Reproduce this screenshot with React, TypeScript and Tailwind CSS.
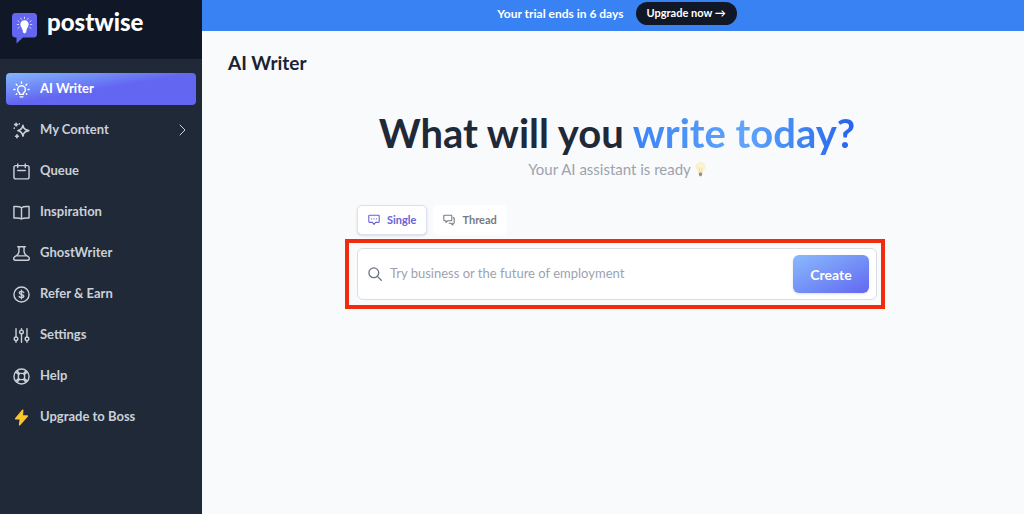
import React from 'react';
import clsx from 'clsx';

type IconProps = { className?: string };

const stroke = {
  fill: 'none',
  stroke: 'currentColor',
  strokeWidth: 1.5,
  strokeLinecap: 'round',
  strokeLinejoin: 'round',
  'aria-hidden': true,
} as const;

const BulbIcon = ({ className }: IconProps) => (
  <svg viewBox="0 0 18 18" className={className} {...stroke}>
    <path d="M6.900 12.500C5.500 11.700 4.900 10.500 4.900 9.200a4.100 4.100 0 0 1 8.200 0c0 1.300-.6 2.500-2 3.300v1.700H6.900z" />
    <path d="M7.500 16.800h3M9 1v1.400M3.400 3.500l.9.900M14.600 3.500l-.9.900M.9 9h1.200M15.900 9h1.200M3.400 14l.6-.6M14.600 14l-.6-.6" />
  </svg>
);

const SparkleIcon = ({ className }: IconProps) => (
  <svg viewBox="0 0 18 18" className={className} {...stroke} strokeWidth={1.7}>
    <path d="M10.500 3.500c.8 3.600 1.900 4.800 6.200 5.600-4.300.9-5.400 2.100-6.200 5.800-.8-3.700-1.900-4.900-5.300-5.800 3.400-.8 4.500-2 5.300-5.600z" />
    <path d="M3.300 1.300v3M1.800 2.800h3M4.200 13.600v3M2.700 15.100h3M1.300 6.500v.1M6.700 2v.1" />
  </svg>
);

const CalendarIcon = ({ className }: IconProps) => (
  <svg viewBox="0 0 18 18" className={className} {...stroke}>
    <rect x="1" y="2.800" width="16" height="14" rx="2" />
    <path d="M5 1v3.800M13 1v3.800M5 8h8" />
  </svg>
);

const BookIcon = ({ className }: IconProps) => (
  <svg viewBox="0 0 18 18" className={className} {...stroke}>
    <path d="M9 3.900C7.600 2.700 5 2.500 1 2.700v12.200c3.500-.2 6.600 0 8 1 1.400-1 4.500-1.200 8-1V2.700C13 2.500 10.400 2.700 9 3.900zM9 3.900v12" />
  </svg>
);

const FlaskIcon = ({ className }: IconProps) => (
  <svg viewBox="0 0 18 18" className={className} {...stroke}>
    <path d="M5 1.800h8M6.300 1.800v5.400c0 2-1.200 3.300-4.300 5.200-2.100 1.400-1.400 3.800.7 3.800h12.600c2.100 0 2.800-2.400.7-3.800-3.100-1.900-4.300-3.200-4.300-5.200V1.800" />
    <path d="M4.600 11.500h8.800" />
  </svg>
);

const DollarIcon = ({ className }: IconProps) => (
  <svg viewBox="0 0 18 18" className={className} {...stroke}>
    <circle cx="9" cy="9" r="8" />
    <path d="M11.400 6.900c-.4-.8-1.300-1.200-2.400-1.200-1.400 0-2.300.6-2.300 1.600C6.700 9.500 11.400 8.400 11.400 10.700c0 1-1 1.600-2.400 1.600-1.200 0-2.100-.5-2.500-1.300M9 4.500v9" />
  </svg>
);

const SlidersIcon = ({ className }: IconProps) => (
  <svg viewBox="0 0 18 18" className={className} {...stroke}>
    <path d="M3.200 1.800v8.600M3.200 14.600v1.600M9 1.800v1.400M9 7.200v9M14.800 1.800v8.600M14.800 14.600v1.600" />
    <circle cx="3.200" cy="12.500" r="1.900" />
    <circle cx="9" cy="5.200" r="1.900" />
    <circle cx="14.800" cy="12.500" r="1.900" />
  </svg>
);

const HelpIcon = ({ className }: IconProps) => (
  <svg viewBox="0 0 18 18" className={className} {...stroke}>
    <circle cx="9" cy="9" r="8" />
    <rect x="5.700" y="5.700" width="6.600" height="6.600" rx="2.400" />
    <path d="M3.200 4.500l2.700 2.200M4.500 3.200l2.200 2.700M14.800 4.500l-2.700 2.200M13.500 3.200l-2.200 2.700M3.200 13.500l2.700-2.200M4.500 14.800l2.200-2.700M14.800 13.500l-2.700-2.200M13.500 14.800l-2.200-2.700" />
  </svg>
);

const BoltIcon = ({ className }: IconProps) => (
  <svg viewBox="0 0 18 18" className={clsx(className, 'text-[#fbc62e]')} aria-hidden="true">
    <path d="M10.300 1.200 2.800 10.300h5L7 16.800l8.200-9.300H9.700z" fill="currentColor" stroke="currentColor" strokeWidth="1.600" strokeLinejoin="round" />
  </svg>
);

const ChevronIcon = ({ className }: IconProps) => (
  <svg viewBox="0 0 12 12" className={className} {...stroke} strokeWidth={1}>
    <path d="M3 1 8 6l-5 5" />
  </svg>
);

const SingleIcon = ({ className }: IconProps) => (
  <svg viewBox="0 0 12 12" className={className} {...stroke} strokeWidth={1.1}>
    <path d="M1.600 1.200h8.800c.5 0 .8.300.8.800v5.600c0 .5-.3.800-.8.800H7.600L6 10.300 4.400 8.400H1.600c-.5 0-.8-.3-.8-.8V2c0-.5.3-.8.800-.8z" />
    <path d="M3.600 4.800v.1M6 4.800v.1M8.400 4.800v.1" />
  </svg>
);

const ThreadIcon = ({ className }: IconProps) => (
  <svg viewBox="0 0 12 12" className={className} {...stroke} strokeWidth={1.1}>
    <path d="M1.500 1.200h6.600c.4 0 .7.300.7.700v4.200c0 .4-.3.700-.7.700H4.700L3 8.400V6.800H1.500c-.4 0-.7-.3-.7-.7V1.900c0-.4.300-.7.700-.7z" />
    <path d="M10.400 3.600c.5 0 .8.300.8.800v4.200c0 .4-.3.700-.7.700h-.7v1.700L8 9.300H6.200" />
  </svg>
);

const SearchIcon = ({ className }: IconProps) => (
  <svg viewBox="0 0 14 14" className={className} {...stroke} strokeWidth={1.3}>
    <circle cx="5.800" cy="5.800" r="4.900" />
    <path d="m9.400 9.400 3.900 3.900" />
  </svg>
);

const Logo = ({ className }: IconProps) => (
  <svg viewBox="0 0 25 31" className={className} aria-hidden="true">
    <path d="M3.500 0h18A3.500 3.500 0 0 1 25 3.500v17.500a3.500 3.500 0 0 1-3.500 3.500H11L4.500 30.500v-6h-1A3.500 3.500 0 0 1 0 21V3.500A3.500 3.500 0 0 1 3.500 0z" fill="#6366f1" />
    <path d="M12.500 7.300a4 4 0 0 1 4.200 4.200c0 2.300-1.900 3-2 5.500h-4.300c-.1-2.500-2.100-3.200-2.100-5.500a4 4 0 0 1 4.200-4.200zM10.800 17h3.500v2.300l-1.800 1.200-1.700-1.200z" fill="#fff" />
    <path d="M12.500 4.200v1.300M8.700 5.200l.7 1.100M16.300 5.200l-.7 1.100M6 7.900l1.100.7M19 7.900l-1.100.7M5.200 11.500h1.400M19.800 11.500h-1.400M6 15.200l1.100-.7M19 15.200l-1.100-.7" stroke="#fff" strokeWidth=".7" strokeLinecap="round" />
  </svg>
);

const IdeaIcon = ({ className }: IconProps) => (
  <svg viewBox="0 0 11 15" className={className} aria-hidden="true">
    <path d="M5.500.6a4.300 4.300 0 0 1 4.300 4.300c0 2.500-2.100 3.300-2.400 5.900H3.600C3.300 8.200 1.200 7.400 1.200 4.900A4.300 4.300 0 0 1 5.500.6z" fill="#fdf3d0" stroke="#f6e2a4" strokeWidth=".5" />
    <path d="M4.300 5.500 5 10.500h1l.7-5" fill="none" stroke="#f2cf74" strokeWidth=".6" />
    <path d="M3.900 10.800h3.200v2l-.8 1.500H4.700l-.8-1.500z" fill="#8d8f98" />
  </svg>
);

const navItems = [
  { label: 'AI Writer', icon: BulbIcon, active: true },
  { label: 'My Content', icon: SparkleIcon, expandable: true },
  { label: 'Queue', icon: CalendarIcon },
  { label: 'Inspiration', icon: BookIcon },
  { label: 'GhostWriter', icon: FlaskIcon },
  { label: 'Refer & Earn', icon: DollarIcon },
  { label: 'Settings', icon: SlidersIcon },
  { label: 'Help', icon: HelpIcon },
  { label: 'Upgrade to Boss', icon: BoltIcon },
];

const Sidebar = () => (
  <aside className="flex w-[202px] shrink-0 flex-col bg-[#1f2937]">
    <div className="flex h-[59px] items-start gap-[10px] bg-[#101726] px-3 pt-[13px]">
      <Logo className="h-[31px] w-[25px]" />
      <span className="text-[24px] leading-[18px] font-black text-white">postwise</span>
    </div>
    <nav className="flex flex-col gap-[9px] px-[6px] pt-[14px]">
      {navItems.map(({ label, icon: Icon, active, expandable }) => (
        <a
          key={label}
          href="#"
          className={clsx(
            'flex h-8 items-center gap-[10px] rounded-[4px] px-[7px] text-[13px] font-bold',
            active
              ? 'bg-linear-to-br from-[#86b6fb] via-[#6366f1] via-50% to-[#6366f1] text-white'
              : 'text-[#cbd0d8]'
          )}
        >
          <Icon className="size-[17px] shrink-0" />
          <span className="grow">{label}</span>
          {expandable && <ChevronIcon className="size-3" />}
        </a>
      ))}
    </nav>
  </aside>
);

const TrialBanner = () => (
  <div className="flex h-[31px] items-start justify-center gap-3 bg-[#3982f3] pt-[2px] pl-2 text-white">
    <p className="text-[12px] leading-[23px] font-bold">Your trial ends in 6 days</p>
    <button type="button" className="h-[23px] rounded-full bg-[#101726] px-[11px] text-[11px] font-bold">
      Upgrade now →
    </button>
  </div>
);

const Composer = () => (
  <form className="w-full max-w-[544px] pr-1" onSubmit={(e) => e.preventDefault()}>
    <div className="flex gap-[6px] px-3 text-[11px]">
      <button type="button" className="flex h-[30px] items-center gap-[7px] rounded-[5px] border border-[#dde1ee] bg-white px-[10px] font-bold text-[#6562d6] shadow-sm">
        <SingleIcon className="size-3" />
        Single
      </button>
      <button type="button" className="flex h-[30px] items-center gap-[7px] rounded-[5px] bg-white px-[10px] font-bold text-[#757b87]">
        <ThreadIcon className="size-3" />
        Thread
      </button>
    </div>
    <div className="mt-1 border-4 border-[#ef2b10] py-[5px] pr-1 pl-2">
      <div className="flex h-[52px] items-center gap-2 rounded-[6px] border border-[#d9dde3] bg-white pr-[7px] pl-[10px]">
        <SearchIcon className="size-[14px] shrink-0 text-[#6b7280]" />
        <input
          type="text"
          aria-label="Topic"
          placeholder="Try business or the future of employment"
          className="min-w-0 grow text-[13px] text-gray-800 outline-none placeholder:text-[#9ca3af]"
        />
        <button type="submit" className="h-[38px] w-[76px] rounded-[6px] bg-linear-to-br from-[#8bbafc] to-[#6366f1] text-[14px] font-bold text-white shadow">
          Create
        </button>
      </div>
    </div>
  </form>
);

export default function App() {
  return (
    <div className="flex min-h-screen bg-[#f9fafc] font-['Lato','Liberation_Sans',sans-serif]">
      <Sidebar />
      <main className="min-w-0 grow">
        <TrialBanner />
        <h1 className="px-[26px] pt-5 text-[19px] leading-6 font-bold text-[#1a2332]">AI Writer</h1>
        <section className="flex flex-col items-center pt-[35px] pl-2">
          <h2 className="text-[40px] leading-[46px] font-bold whitespace-nowrap text-[#1f2937]">
            What will you{' '}
            <span className="bg-linear-to-r from-[#3b82f6] via-[#60a5fa] to-[#2563eb] bg-clip-text text-transparent">
              write today?
            </span>
          </h2>
          <p className="mt-[3px] mb-[26px] flex items-center gap-1 text-[15px] leading-5 text-[#9ca3af]">
            Your AI assistant is ready
            <IdeaIcon className="h-[15px] w-[11px]" />
          </p>
          <Composer />
        </section>
      </main>
    </div>
  );
}
